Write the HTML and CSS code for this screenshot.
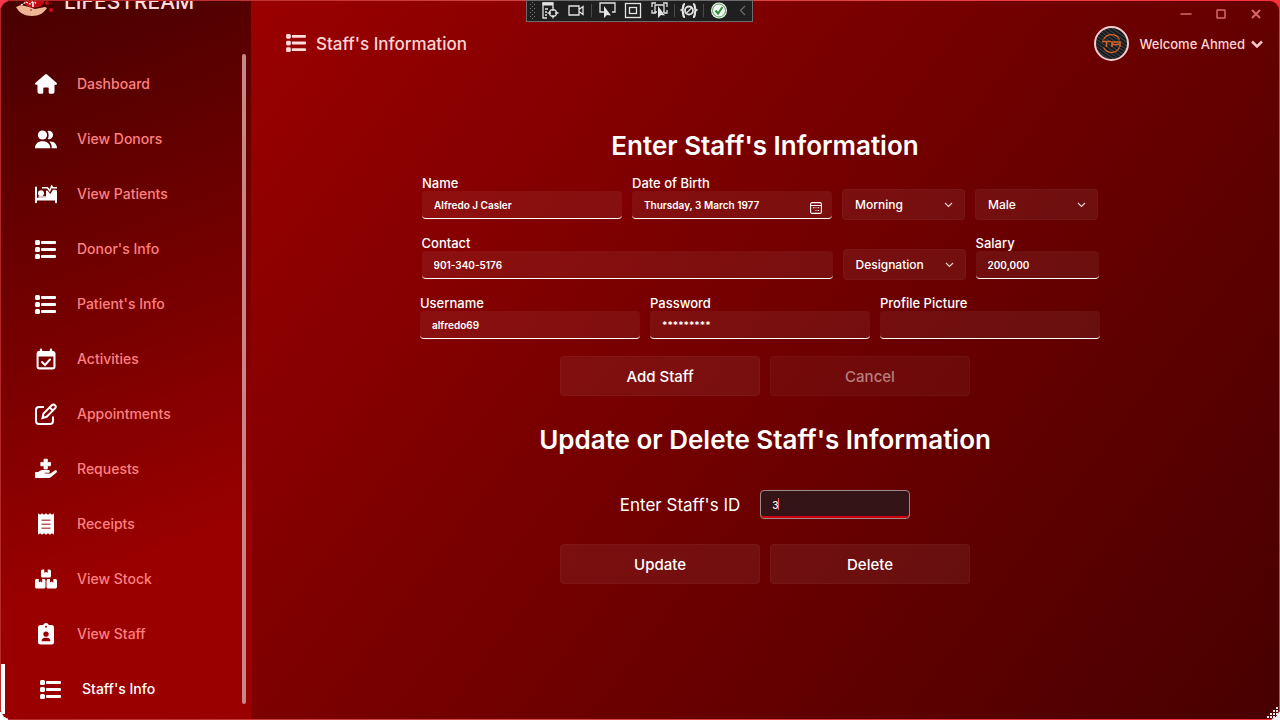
FILE: index.html
```html
<!DOCTYPE html>
<html lang="en">
<head>
<meta charset="utf-8">
<title>Lifestream - Staff's Information</title>
<link rel="stylesheet" href="styles.css">
</head>
<body>
<svg class="defs" aria-hidden="true">
  <symbol id="list" viewBox="0 0 22 20">
    <rect x="0" y="0" width="5" height="5" rx="1.5"/><rect x="0" y="7" width="5" height="5" rx="1.5"/><rect x="0" y="14" width="5" height="5" rx="1.5"/>
    <rect x="6" y="1" width="15" height="3" rx="1"/><rect x="6" y="8" width="15" height="3" rx="1"/><rect x="6" y="15" width="15" height="3" rx="1"/>
  </symbol>
</svg>
<div class="window">
  <aside class="sidebar">
    <div class="brand">
      <svg class="brand-logo" viewBox="0 0 38 36" aria-hidden="true">
        <path d="M18 2C14 10 8 15 8 22a11 8 0 0 0 20 0C28 15 22 10 18 2z" fill="#c40a10"/>
        <path d="M5 24l5-3 4 2 4-4 2 4" fill="none" stroke="#fff" stroke-width="1.2" stroke-dasharray="2 1"/>
        <path d="M17 21v5" stroke="#fff" stroke-width="1.5"/>
        <path d="M0 26l5-2 8 2 6 2 10-2 2 1c-3 5-8 8-15 8C9 35 3 32 0 26z" fill="#edb596"/>
        <path d="M14 29h2" stroke="#c40a10"/>
        <circle cx="31" cy="22" r="2" fill="#c40a10"/><circle cx="35" cy="29" r="2" fill="#d80b12"/>
      </svg>
      <span>LIFESTREAM</span>
    </div>
    <div class="nav-area">
      <nav class="nav">
        <a href="#"><svg viewBox="0 0 22 22"><path d="M10 1.4a1.5 1.5 0 0 1 2 0l9.500 8.300c.9.800.4 2.100-.7 2.100h-1.300v7.200a1.800 1.800 0 0 1-1.800 1.800h-2.600a1.400 1.400 0 0 1-1.400-1.400v-4.200a.8.800 0 0 0-.8-.8H9.100a.8.800 0 0 0-.8.800v4.200a1.400 1.400 0 0 1-1.400 1.400H4.300A1.800 1.800 0 0 1 2.500 19v-7.200H1.200C.1 11.800-.4 10.500.5 9.700z"/></svg>Dashboard</a>
        <a href="#"><svg viewBox="0 0 22 22"><circle cx="7.500" cy="7" r="4.600"/><path d="M0 20.300c0-4.300 2.800-7 7.500-7s7.800 2.700 7.800 7z"/><path d="M12.500 3a4.200 4.200 0 1 1 .2 8c1.300-2.100 1.300-5.800-.2-8zM14.300 13.500c4.500-.6 7.700 2.400 7.700 6.800h-5.300c.1-2.900-.5-5-2.400-6.800z"/></svg>View Donors</a>
        <a href="#"><svg viewBox="0 0 22 22"><path d="M0 4.500a1 1 0 0 1 2 0v10.300h9V7.500h1.300l2.200 2.600a1 1 0 0 0 1.700-.3l1.700-3h2.500c.9 0 1.600.7 1.600 1.700v10.700a1 1 0 0 1-2 0v-1.700H2v1.700a1 1 0 0 1-2 0z"/><circle cx="6" cy="10.200" r="3"/><path d="M7 4.700h5.500l2.200 3 2-4.500 1 1.500H22" fill="none" stroke="#fff" stroke-width="1.600"/><path d="M3.500 14h8" stroke="#fff" stroke-width="1.500"/></svg>View Patients</a>
        <a href="#"><svg viewBox="0 -2 22 22"><use href="#list" width="22" height="20"/></svg>Donor's Info</a>
        <a href="#"><svg viewBox="0 -2 22 22"><use href="#list" width="22" height="20"/></svg>Patient's Info</a>
        <a href="#"><svg viewBox="0 0 22 22"><path fill-rule="evenodd" d="M6 .5c.7 0 1.200.5 1.200 1.200v1.400h7.600V1.700a1.200 1.200 0 0 1 2.400 0v1.400h1a2.400 2.400 0 0 1 2.300 2.400v13.600a2.400 2.400 0 0 1-2.400 2.400H4a2.400 2.400 0 0 1-2.400-2.400V5.500A2.400 2.400 0 0 1 4 3.100h.8V1.700C4.800 1 5.300.5 6 .5zM3.600 8.600v10.700h14.800V8.600z"/><path d="M7 14l3 3 5-5.500" fill="none" stroke="#fff" stroke-width="2" stroke-linecap="round"/></svg>Activities</a>
        <a href="#"><svg viewBox="0 0 22 22" class="line"><path d="M9 4H4a3 3 0 0 0-3 3v11a3 3 0 0 0 3 3h11a3 3 0 0 0 3-3v-4.500" stroke-width="2"/><path d="M7.500 15l1-4.500L16.800 2.200a2.200 2.200 0 0 1 3.200 3.200L11.700 13.800z" stroke-width="2"/><path d="M14.800 4.500l3 3" stroke-width="2"/></svg>Appointments</a>
        <a href="#"><svg viewBox="0 0 22 22"><path d="M9 1.200h3.400v3.200h3.200v3.400h-3.200V11H9V7.800H5.800V4.400H9z" stroke="#fff" stroke-width=".8" stroke-linejoin="round"/><path fill-rule="evenodd" d="M0 14.800c0-.5.400-.8.800-.8h2.400l1.600-1.200c.9-.6 1.800-.8 2.700-.8h6a1.400 1.400 0 0 1 .4 2.700H9.700v.8h5.600l4.400-3c1.600-1 3 .7 1.800 1.900l-5 4.300c-1 .8-2 1.300-3.300 1.300H.8a.8.800 0 0 1-.8-.8z"/></svg>Requests</a>
        <a href="#"><svg viewBox="0 0 22 22"><path d="M3 .3l2.200 1.400L7 .3l2 1.400 2-1.400 2 1.400 2-1.400 2 1.400L19 .3v21.400l-2-1.400-2 1.400-2-1.400-2 1.400-2-1.400-2 1.400-1.800-1.400L3 21.700z"/><path d="M6.500 7.200h9M6.500 11.200h9M6.500 15.200h9" stroke="#bb5c5c" stroke-width="1.400"/></svg>Receipts</a>
        <a href="#"><svg viewBox="0 0 22 22"><path d="M7.500 1.500h1.800v3.300l1.700-.8 1.700.8V1.500h1.800A1.500 1.500 0 0 1 16 3v5a1.500 1.500 0 0 1-1.500 1.500h-7A1.500 1.500 0 0 1 6 8V3a1.500 1.500 0 0 1 1.500-1.500zM1.800 11h2v3.400l1.700-.8 1.700.8V11h1.500c1 0 1.800.7 1.800 1.700v6.100c0 1-.8 1.800-1.800 1.800H1.800C.8 20.600 0 19.800 0 18.800v-6.100C0 11.700.8 11 1.800 11zM13.300 11h1.700v3.400l1.700-.8 1.700.8V11h1.800c1 0 1.800.7 1.800 1.700v6.100c0 1-.8 1.800-1.800 1.800h-6.900c-1 0-1.800-.8-1.800-1.800v-6.100c0-1 .8-1.700 1.500-1.700z"/></svg>View Stock</a>
        <a href="#"><svg viewBox="0 0 22 22"><path fill-rule="evenodd" d="M11 0c1.400 0 2.300.8 2.800 2h2.700A2.500 2.500 0 0 1 19 4.500V19a2.500 2.500 0 0 1-2.500 2.500h-11A2.500 2.500 0 0 1 3 19V4.500A2.500 2.500 0 0 1 5.500 2h2.700C8.700.8 9.600 0 11 0zm0 2.800a1 1 0 1 0 0 2 1 1 0 0 0 0-2zm0 5.600a2.700 2.700 0 1 0 0 5.400 2.700 2.700 0 0 0 0-5.400zM6.600 18.200h8.800c0-2-1.400-3.400-3.200-3.400H9.800c-1.800 0-3.200 1.400-3.200 3.400z"/></svg>View Staff</a>
        <a href="#" class="active" aria-current="page"><svg viewBox="0 -2 22 22"><use href="#list" width="22" height="20"/></svg>Staff's Info</a>
      </nav>
      <div class="thumb"></div>
    </div>
  </aside>

  <main class="main">
    <div class="caption">
      <button aria-label="Minimize"><svg viewBox="0 0 12 12"><path d="M0.500 6h11"/></svg></button>
      <button aria-label="Maximize"><svg viewBox="0 0 12 12"><rect x="2" y="2" width="8" height="8" rx=".5"/></svg></button>
      <button aria-label="Close"><svg viewBox="0 0 12 12"><path d="M2 2l8 8M10 2l-8 8" stroke-width="2"/></svg></button>
    </div>
    <header class="header">
      <div class="page-title"><svg viewBox="0 0 22 20" aria-hidden="true"><use href="#list"/></svg>Staff's Information</div>
      <div class="user">
        <svg class="avatar" viewBox="0 0 35 35" aria-hidden="true">
          <defs><pattern id="carbon" width="3" height="3" patternUnits="userSpaceOnUse" patternTransform="rotate(35)"><rect width="3" height="3" fill="#17191b"/><rect width="3" height="1" fill="#3f4245"/></pattern></defs>
          <circle cx="17.500" cy="17.500" r="16.500" fill="url(#carbon)" stroke="#f3cccc" stroke-width="2"/>
          <g fill="none" stroke="#d9642a" stroke-width="1.200"><path d="M9.500 13.500a9 9 0 0 1 16 0M9.500 21.500a9 9 0 0 0 16 0"/><path d="M8 15.500h9M12.500 16v5M18 21v-5h8v5M18 18.500h7" stroke-width="1.600"/></g>
        </svg>
        <span>Welcome Ahmed</span>
        <button aria-label="Account menu"><svg viewBox="0 0 12 8"><path d="M1 1.500L6 6.500l5-5"/></svg></button>
      </div>
    </header>

    <form class="content">
      <h1>Enter Staff's Information</h1>
      <div class="rows">
        <div class="row">
          <div class="field w200"><label for="name">Name</label><input id="name" value="Alfredo J Casler"></div>
          <div class="field w200"><label for="dob">Date of Birth</label>
            <div class="box"><input id="dob" value="Thursday, 3 March 1977">
              <button type="button" class="cal" aria-label="Open calendar"><svg viewBox="0 0 12 12"><rect x=".6" y=".6" width="10.800" height="10.800" rx="1.500"/><path d="M1 3.500h10M3 5.800h1.500M5.500 5.800h1M7.700 5.800h1.500M5.500 8.500h1M7.700 8.500h1.500" /></svg></button>
            </div>
          </div>
          <div class="select"><select aria-label="Shift"><option>Morning</option></select><svg viewBox="0 0 9 6"><path d="M1 1l3.500 3.500L8 1"/></svg></div>
          <div class="select"><select aria-label="Gender"><option>Male</option></select><svg viewBox="0 0 9 6"><path d="M1 1l3.500 3.500L8 1"/></svg></div>
        </div>
        <div class="row">
          <div class="field w411"><label for="contact">Contact</label><input id="contact" value="901-340-5176"></div>
          <div class="select"><select aria-label="Designation"><option>Designation</option></select><svg viewBox="0 0 9 6"><path d="M1 1l3.500 3.500L8 1"/></svg></div>
          <div class="field w123"><label for="salary">Salary</label><input id="salary" value="200,000"></div>
        </div>
        <div class="row">
          <div class="field w220"><label for="user">Username</label><input id="user" value="alfredo69"></div>
          <div class="field w220"><label for="pass">Password</label><input id="pass" value="*********"></div>
          <div class="field w220"><label for="pic">Profile Picture</label><input id="pic"></div>
        </div>
      </div>
      <div class="actions"><button type="button">Add Staff</button><button type="button" disabled>Cancel</button></div>
      <h2>Update or Delete Staff's Information</h2>
      <div class="id-row">
        <label for="sid">Enter Staff's ID</label>
        <div class="id-box"><input id="sid" value="3"><i class="caret"></i></div>
      </div>
      <div class="actions"><button type="button">Update</button><button type="button">Delete</button></div>
    </form>
  </main>
</div>

<div class="debugbar">
  <svg viewBox="0 0 227 22" aria-hidden="true">
    <defs><pattern id="dots" width="4" height="4" patternUnits="userSpaceOnUse"><rect width="1" height="1" fill="#777"/><rect x="2" y="2" width="1" height="1" fill="#777"/></pattern></defs>
    <rect x="4" y="2" width="6" height="17" fill="url(#dots)"/>
    <g transform="translate(1 0)">
    <g fill="none" stroke="#e4e4e4" stroke-width="1.300">
      <path d="M20 18h-4V3h10v5"/><path d="M15.500 4H26" stroke-width="3"/><path d="M18 9h3M18 12h2M18 15h2"/>
      <circle cx="26" cy="13" r="3.400"/><path d="M26 7.500v3.500M26 15v3.500M20.500 13H24M28 13h3.500"/>
      <path d="M42 6h10v9H42zM52 9.500l4-3v8l-4-3"/>
      <path d="M77 12h-4V3h15v9h-3"/>
      <rect x="98.500" y="3.500" width="15" height="14"/><rect x="102.500" y="7.500" width="7" height="6"/>
      <path d="M125 7V3h4M136 3h4v4M125 10v3h4M140 10v3h-3M130 12h-2V5h9v7h-1"/>
      <path d="M158 4c-3 0-1 5-3 6 2 1 0 7 3 7M166 4c3 0 1 5 3 6-2 1 0 7-3 7" stroke-width="2.200"/><circle cx="162" cy="10.500" r="4" stroke-width="1.800"/><path d="M159.500 13l5-5"/>
    </g>
    <g fill="#e4e4e4"><path d="M77 6v12l3-3 4 .5zM131 6v12l3-3 4 .5z"/></g>
    <path d="M64.500 4v13M147.500 4v13M176.500 4v13" stroke="#4a4a4a"/>
    <circle cx="192" cy="10.500" r="8" fill="#f2f2f2"/><circle cx="192" cy="10.500" r="6.500" fill="none" stroke="#4da452" stroke-width="1"/>
    <path d="M188.500 10.500l2.500 3 4.500-6.500" fill="none" stroke="#2f9136" stroke-width="2"/>
    <path d="M218 6l-4.500 4.500L218 15" fill="none" stroke="#6a6a6a" stroke-width="1.300"/>
    </g>
  </svg>
</div>
<svg class="grip" viewBox="0 0 12 12" aria-hidden="true"><path d="M9 0h2v2H9zM9 3h2v2H9zM6 3h2v2H6zM9 6h2v2H9zM6 6h2v2H6zM3 6h2v2H3zM9 9h2v2H9zM6 9h2v2H6zM3 9h2v2H3zM0 9h2v2H0z"/></svg>
</body>
</html>
```
FILE: styles.css
```css
* { box-sizing: border-box; }
body {
  margin: 0;
  min-height: 100vh;
  display: flex;
  padding: 1px;
  font-family: Inter, "Open Sans", sans-serif;
  font-weight: 500;
  color: #fff;
  background:
    linear-gradient(#fff, #fff) left bottom / 8px 8px no-repeat,
    linear-gradient(#f2eaf0, #f2eaf0) right bottom / 8px 8px no-repeat,
    linear-gradient(#f2364c, #f2364c) left top / 8px 8px no-repeat,
    linear-gradient(100deg, #b02424, #d84848 45%, #ff2e32);
}
button, input, select { font: inherit; color: inherit; }
button { background: none; border: 0; padding: 0; }
.defs { position: absolute; width: 0; height: 0; }
.window {
  flex: 1;
  display: flex;
  min-width: 0;
  border-radius: 9px;
  overflow: hidden;
}

/* Sidebar */
.sidebar {
  width: 250px;
  flex: none;
  display: flex;
  flex-direction: column;
  background: linear-gradient(160deg, #480000, #9a0000 76%);
}
.brand {
  height: 53px;
  display: flex;
  align-items: flex-start;
  gap: 10px;
  padding-left: 15px;
  overflow: hidden;
  font-size: 21px;
  line-height: 24px;
  color: #fbdcdc;
}
.brand-logo { width: 38px; height: 36px; margin-top: -20px; flex: none; }
.brand span { margin-top: -11px; }
.nav-area { display: flex; flex: 1; padding-right: 5px; }
.nav { flex: 1; padding-top: 5px; display: flex; flex-direction: column; gap: 5px; }
.nav a {
  height: 50px;
  display: flex;
  align-items: center;
  gap: 20px;
  padding-left: 34px;
  font-size: 14px;
  line-height: 16px;
  color: #ff8080;
  text-decoration: none;
}
.nav svg { width: 22px; height: 22px; fill: #fff; }
.nav .line { fill: none; stroke: #fff; }
.nav a.active { border-left: 4px solid #fff; padding-left: 35px; color: #fff; }
.thumb { width: 4px; height: 650px; border-radius: 2px; background: #c98686; }

/* Main area */
.main {
  flex: 1;
  min-width: 0;
  display: flex;
  flex-direction: column;
  background: linear-gradient(127deg, #9a0000, #480000);
}
.caption { display: flex; justify-content: flex-end; height: 25px; padding-right: 6px; }
.caption button { width: 35px; display: flex; align-items: center; justify-content: center; }
.caption svg { width: 12px; height: 12px; fill: none; stroke: #d86868; stroke-width: 1.5; }
.header {
  display: flex;
  justify-content: space-between;
  align-items: center;
  height: 35px;
  padding: 0 16px 0 35px;
  color: #ffd4d4;
}
.page-title { display: flex; align-items: center; gap: 9px; font-size: 17px; line-height: 20px; }
.page-title svg { width: 21px; height: 19px; fill: #ffdcdc; }
.user { display: flex; align-items: center; gap: 10px; font-size: 13px; line-height: 16px; }
.avatar { width: 35px; height: 35px; }
.user button { display: flex; margin-left: -4px; }
.user button svg { width: 12px; height: 8px; fill: none; stroke: #f6c4c4; stroke-width: 2.5; }

/* Form */
.content { display: flex; flex-direction: column; align-items: center; padding-top: 70px; }
h1, h2 { margin: 0; font-size: 26px; line-height: 30px; font-weight: 600; }
.rows { margin-top: 14px; display: flex; flex-direction: column; align-items: center; gap: 15px; padding-right: 10px; }
.row { display: flex; gap: 10px; min-height: 45px; }
.field { display: flex; flex-direction: column; }
.field label { font-size: 13px; line-height: 16px; }
.w200 { width: 200px; }
.w411 { width: 411px; }
.w123 { width: 123px; }
.w220 { width: 220px; }
.field input {
  width: 100%;
  height: 28px;
  padding: 0 12px;
  border: 0;
  border-bottom: 1px solid #fff;
  border-radius: 4px;
  background: rgba(255, 255, 255, .06);
  font-size: 10px;
  font-weight: 600;
  outline: 0;
}
.box { position: relative; }
.box .cal { position: absolute; right: 10px; top: 11px; display: flex; }
.cal svg { width: 12px; height: 12px; fill: none; stroke: #fff; stroke-width: 1.1; }
.select { position: relative; width: 123px; height: 31px; margin-top: 14px; }
.select select {
  appearance: none;
  width: 100%;
  height: 100%;
  padding: 0 12px;
  border: 1px solid rgba(255, 255, 255, .03);
  border-radius: 4px;
  background: rgba(255, 255, 255, .06);
  font-size: 12px;
}
.select svg { position: absolute; right: 12px; top: 13px; width: 9px; height: 6px; fill: none; stroke: #f0d4d4; stroke-width: 1.1; }
.actions { display: flex; gap: 10px; margin-top: 16px; }
.actions button {
  width: 200px;
  height: 40px;
  border: 1px solid rgba(255, 255, 255, .03);
  border-radius: 4px;
  background: rgba(255, 255, 255, .06);
  font-size: 15px;
}
.actions button:disabled { background: rgba(255, 255, 255, .04); color: #b77f7f; }
h2 { margin-top: 29px; }
.id-row { display: flex; align-items: center; gap: 20px; margin-top: 35px; font-size: 17px; font-weight: 400; }
.id-box { position: relative; display: flex; }
.id-box input {
  width: 150px;
  height: 29px;
  padding: 0 11px;
  border: 1px solid #a08888;
  border-radius: 4px;
  background: #341416;
  box-shadow: inset 0 -2px #d00010;
  font-size: 10px;
  font-weight: 500;
  outline: 0;
}
.caret { position: absolute; left: 18px; top: 8px; width: 1px; height: 12px; background: #ff6060; }
.id-row + .actions { margin-top: 25px; }

/* Overlays */
.debugbar {
  position: absolute;
  top: 0;
  left: 50%;
  width: 227px;
  height: 22px;
  margin-left: -114px;
  background: #1f1f1f;
  outline: 1px solid #6c6c6c;
  outline-offset: -1px;
}
.debugbar svg { display: block; width: 227px; height: 22px; }
.grip { position: absolute; right: 1px; bottom: 1px; width: 12px; height: 12px; fill: #f0e0ea; }
```
